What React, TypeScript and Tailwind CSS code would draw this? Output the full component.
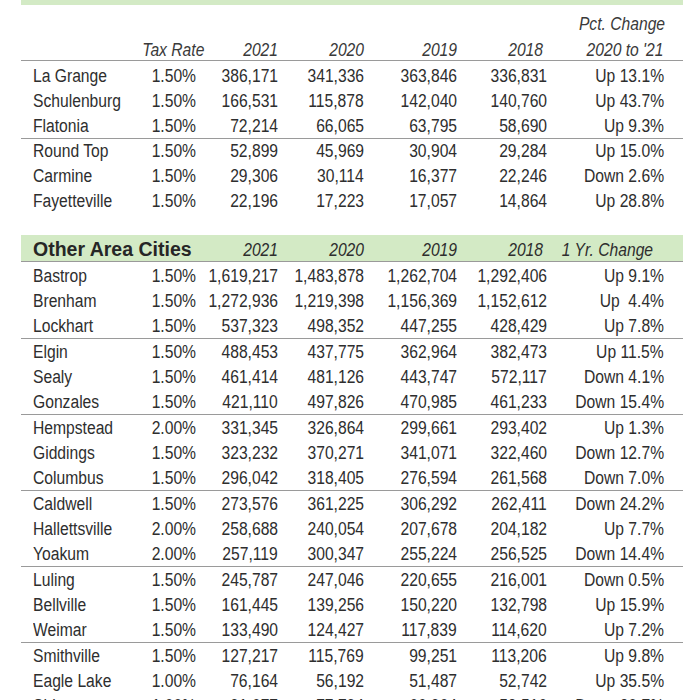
import type { ReactNode } from "react";

const cols = "grid grid-cols-[120px_55px_82px_86px_93px_90px_117px]";

type Row = [string, string, string, string, string, string, string, boolean?];

const fayette: Row[] = [
  ["La Grange", "1.50%", "386,171", "341,336", "363,846", "336,831", "Up 13.1%"],
  ["Schulenburg", "1.50%", "166,531", "115,878", "142,040", "140,760", "Up 43.7%"],
  ["Flatonia", "1.50%", "72,214", "66,065", "63,795", "58,690", "Up 9.3%"],
  ["Round Top", "1.50%", "52,899", "45,969", "30,904", "29,284", "Up 15.0%", true],
  ["Carmine", "1.50%", "29,306", "30,114", "16,377", "22,246", "Down 2.6%"],
  ["Fayetteville", "1.50%", "22,196", "17,223", "17,057", "14,864", "Up 28.8%"],
];

const other: Row[] = [
  ["Bastrop", "1.50%", "1,619,217", "1,483,878", "1,262,704", "1,292,406", "Up 9.1%"],
  ["Brenham", "1.50%", "1,272,936", "1,219,398", "1,156,369", "1,152,612", "Up  4.4%"],
  ["Lockhart", "1.50%", "537,323", "498,352", "447,255", "428,429", "Up 7.8%"],
  ["Elgin", "1.50%", "488,453", "437,775", "362,964", "382,473", "Up 11.5%", true],
  ["Sealy", "1.50%", "461,414", "481,126", "443,747", "572,117", "Down 4.1%"],
  ["Gonzales", "1.50%", "421,110", "497,826", "470,985", "461,233", "Down 15.4%"],
  ["Hempstead", "2.00%", "331,345", "326,864", "299,661", "293,402", "Up 1.3%", true],
  ["Giddings", "1.50%", "323,232", "370,271", "341,071", "322,460", "Down 12.7%"],
  ["Columbus", "1.50%", "296,042", "318,405", "276,594", "261,568", "Down 7.0%"],
  ["Caldwell", "1.50%", "273,576", "361,225", "306,292", "262,411", "Down 24.2%", true],
  ["Hallettsville", "2.00%", "258,688", "240,054", "207,678", "204,182", "Up 7.7%"],
  ["Yoakum", "2.00%", "257,119", "300,347", "255,224", "256,525", "Down 14.4%"],
  ["Luling", "1.50%", "245,787", "247,046", "220,655", "216,001", "Down 0.5%", true],
  ["Bellville", "1.50%", "161,445", "139,256", "150,220", "132,798", "Up 15.9%"],
  ["Weimar", "1.50%", "133,490", "124,427", "117,839", "114,620", "Up 7.2%"],
  ["Smithville", "1.50%", "127,217", "115,769", "99,251", "113,206", "Up 9.8%", true],
  ["Eagle Lake", "1.00%", "76,164", "56,192", "51,487", "52,742", "Up 35.5%"],
  ["Shiner", "1.00%", "91,077", "77,794", "66,904", "53,516", "Down 20.7%"],
];

// newsprint uses a condensed face, so squeeze each cell's text
function Num({ children, className = "" }: { children: ReactNode; className?: string }) {
  return (
    <div className={`flex justify-end ${className}`}>
      <span className="inline-block origin-right scale-x-[0.87] whitespace-pre">{children}</span>
    </div>
  );
}

function CityRow({ row, grow }: { row: Row; grow?: boolean }) {
  const [name, rate, a, b, c, d, change, divider] = row;
  return (
    <div
      className={`${cols} h-[25px] items-center ${
        divider ? `border-t border-[#9a9a9a] ${grow ? "box-content" : ""}` : ""
      }`}
    >
      <div className="pl-3">
        <span className="inline-block origin-left scale-x-[0.87] whitespace-pre">{name}</span>
      </div>
      <Num>{rate}</Num>
      <Num>{a}</Num>
      <Num>{b}</Num>
      <Num>{c}</Num>
      <Num>{d}</Num>
      <Num>{change}</Num>
    </div>
  );
}

export default function App() {
  return (
    <div className="h-[700px] w-[700px] overflow-hidden bg-white font-['Liberation_Sans',Arial,sans-serif] text-[18px] leading-none text-[#2e2e2e]">
      <div className="ml-[21px] w-[662px]">
        <div className="h-[5px] bg-[#d3eac5]" />

        {/* Fayette County cities */}
        <div className="pt-[6px] italic text-[#3a3a3a] border-b border-[#9a9a9a]">
          <div className={`${cols} h-[25px] items-center`}>
            <Num className="col-start-7 -mr-px">Pct. Change</Num>
          </div>
          <div className={`${cols} h-[24px] items-end pb-px`}>
            <span />
            <Num className="-mr-2">Tax Rate</Num>
            <Num>2021</Num>
            <Num>2020</Num>
            <Num>2019</Num>
            <Num className="pr-1">2018</Num>
            <Num>2020 to '21</Num>
          </div>
        </div>
        <div className="pt-[2px]">
          {fayette.map((r) => (
            <CityRow key={r[0]} row={r} />
          ))}
        </div>

        {/* Other area cities */}
        <div className="mt-[22px] h-[27px] bg-[#d3eac5] border-b border-[#9a9a9a]">
          <div className={`${cols} h-full items-center pt-[4px]`}>
            <span className="col-span-2 pl-3 font-bold text-[19.5px] text-[#262626] whitespace-nowrap">
              Other Area Cities
            </span>
            <Num className="italic">2021</Num>
            <Num className="italic">2020</Num>
            <Num className="italic">2019</Num>
            <Num className="italic pr-1">2018</Num>
            <Num className="italic pr-[11px]">1 Yr. Change</Num>
          </div>
        </div>
        <div className="pt-px">
          {other.map((r) => (
            <CityRow key={r[0]} row={r} grow />
          ))}
        </div>
      </div>
    </div>
  );
}
